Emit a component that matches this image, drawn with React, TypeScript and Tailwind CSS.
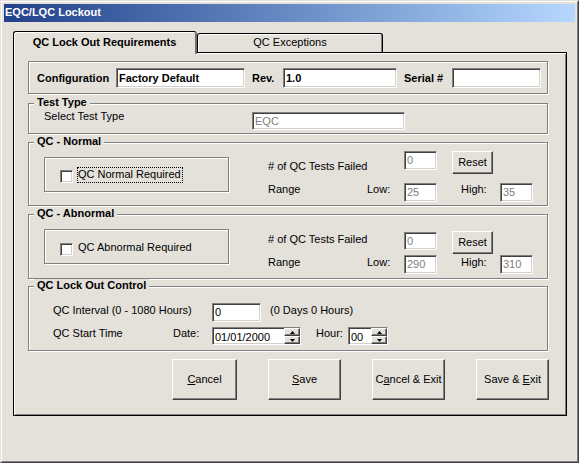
import React from "react";

const SUNKEN =
  "border border-t-[#808080] border-l-[#808080] border-r-white border-b-white shadow-[inset_1px_1px_0_#404040,inset_-1px_-1px_0_#d4d0c8]";
const RAISED =
  "border border-t-white border-l-white border-r-[#404040] border-b-[#404040] shadow-[inset_-1px_-1px_0_#808080] bg-[#E4E1DB]";
const ETCHED =
  "border border-[#808080] shadow-[inset_1px_1px_0_#ffffff,1px_1px_0_#ffffff]";

function Field({
  className,
  children,
  gray = false,
  bold = false,
}: {
  className: string;
  children?: React.ReactNode;
  gray?: boolean;
  bold?: boolean;
}) {
  return (
    <div
      className={`${SUNKEN} flex items-center overflow-hidden bg-white pl-[2px] ${
        gray ? "text-[#808080]" : "text-black"
      } ${bold ? "font-bold" : ""} ${className}`}
    >
      {children}
    </div>
  );
}

function Btn({ className, children }: { className: string; children: React.ReactNode }) {
  return (
    <div className={`${RAISED} flex items-center justify-center ${className}`}>
      <span>{children}</span>
    </div>
  );
}

function Group({
  title,
  className,
  children,
}: {
  title: string;
  className: string;
  children: React.ReactNode;
}) {
  return (
    <div className={`${ETCHED} w-[520px] ${className}`}>
      <div className="-mt-[8px] ml-[5px] w-fit bg-[#E4E1DB] px-[3px] font-bold leading-[13px]">
        {title}
      </div>
      {children}
    </div>
  );
}

function Spinner() {
  return (
    <div className="flex w-[16px] flex-col">
      <div className={`${RAISED} flex h-[8px] items-center justify-center`}>
        <svg width="5" height="3" viewBox="0 0 5 3">
          <path d="M2.5 0L5 3H0Z" fill="#000" />
        </svg>
      </div>
      <div className={`${RAISED} flex h-[8px] items-center justify-center`}>
        <svg width="5" height="3" viewBox="0 0 5 3">
          <path d="M0 0H5L2.5 3Z" fill="#000" />
        </svg>
      </div>
    </div>
  );
}

function CheckRow({ label, focus }: { label: string; focus: boolean }) {
  return (
    <div className="flex items-start">
      <div className={`${SUNKEN} mt-[3px] h-[13px] w-[13px] bg-white`} />
      <div
        className={`ml-[4px] h-[16px] border pr-[1px] ${
          focus ? "border-dotted border-black" : "border-transparent"
        }`}
      >
        {label}
      </div>
    </div>
  );
}

export default function App() {
  return (
    <div className="h-[463px] w-[579px] border border-t-[#E4E1DB] border-l-[#E4E1DB] border-r-[#404040] border-b-[#404040] bg-[#E4E1DB] font-['Liberation_Sans',Arial,sans-serif] text-[11px] leading-[13px] text-black">
      <div className="h-full border border-t-white border-l-white border-r-[#808080] border-b-[#808080] p-[2px]">
        {/* Title bar */}
        <div className="h-[18px] bg-gradient-to-r from-[#23418A] to-[#B6D8FF] pl-[1px] pt-[2px] font-bold text-white">
          EQC/LQC Lockout
        </div>

        {/* Tabs */}
        <div className="ml-[9px] mt-[9px] flex items-start">
          <div className="relative z-10 -mb-[2px] h-[23px] w-[184px] rounded-t-[3px] border-l border-t border-r-2 border-l-black border-t-black border-r-[#707070] bg-[#E4E1DB] pt-[4px] text-center font-bold shadow-[inset_1px_1px_0_#ffffff]">
            QC Lock Out Requirements
          </div>
          <div className="mt-[2px] h-[19px] w-[186px] rounded-t-[3px] border-l border-r border-t border-black pt-[2px] text-center shadow-[inset_1px_1px_0_#ffffff,inset_-1px_0_0_#808080]">
            QC Exceptions
          </div>
        </div>

        {/* Panel */}
        <div className="ml-[9px] h-[364px] w-[554px] border border-black pl-[14px] pt-[8px] shadow-[inset_1px_1px_0_#ffffff,inset_-1px_-1px_0_#808080]">
          {/* Configuration */}
          <div className={`${ETCHED} h-[33px] w-[520px] pl-[8px] pt-[6px] font-bold`}>
            <div className="flex h-[20px] items-center">
              <span className="w-[79px]">Configuration</span>
              <Field className="h-[20px] w-[129px]" bold>
                Factory Default
              </Field>
              <span className="ml-[7px] w-[31px]">Rev.</span>
              <Field className="h-[20px] w-[114px]" bold>
                1.0
              </Field>
              <span className="ml-[7px] w-[48px]">Serial #</span>
              <Field className="h-[20px] w-[89px]" bold>
                {""}
              </Field>
            </div>
          </div>

          {/* Test Type */}
          <Group title="Test Type" className="mt-[9px] h-[31px]">
            <div className="flex items-start pl-[15px]">
              <span className="mt-[1px] w-[208px]">Select Test Type</span>
              <Field className="mt-[3px] h-[18px] w-[153px]" gray>
                EQC
              </Field>
            </div>
          </Group>

          {/* QC - Normal */}
          <Group title="QC - Normal" className="mt-[8px] h-[64px]">
            <div className="flex items-start">
              <div className={`${ETCHED} ml-[15px] mt-[9px] h-[35px] w-[185px]`}>
                <div className="ml-[15px] mt-[9px]">
                  <CheckRow label="QC Normal Required" focus={true} />
                </div>
              </div>
              <div className="ml-[39px] mt-[3px] flex flex-col">
                <div className="flex items-start">
                  <span className="mt-[9px] w-[136px]"># of QC Tests Failed</span>
                  <Field className="h-[19px] w-[33px]" gray>
                    0
                  </Field>
                  <Btn className="ml-[15px] h-[23px] w-[41px]">Reset</Btn>
                </div>
                <div className="mt-[9px] flex items-start">
                  <span className="w-[99px]">Range</span>
                  <span className="w-[37px]">Low:</span>
                  <Field className="h-[19px] w-[33px]" gray>
                    25
                  </Field>
                  <span className="ml-[24px] w-[39px]">High:</span>
                  <Field className="h-[19px] w-[33px]" gray>
                    35
                  </Field>
                </div>
              </div>
            </div>
          </Group>

          {/* QC - Abnormal */}
          <Group title="QC - Abnormal" className="mt-[8px] h-[65px]">
            <div className="flex items-start">
              <div className={`${ETCHED} ml-[15px] mt-[9px] h-[35px] w-[185px]`}>
                <div className="ml-[15px] mt-[10px]">
                  <CheckRow label="QC Abnormal Required" focus={false} />
                </div>
              </div>
              <div className="ml-[39px] mt-[11px] flex flex-col">
                <div className="flex items-start">
                  <span className="mt-[2px] w-[136px]"># of QC Tests Failed</span>
                  <Field className="mt-[1px] h-[18px] w-[33px]" gray>
                    0
                  </Field>
                  <Btn className="ml-[15px] h-[23px] w-[41px]">Reset</Btn>
                </div>
                <div className="mt-[1px] flex items-start">
                  <span className="mt-[1px] w-[99px]">Range</span>
                  <span className="mt-[1px] w-[37px]">Low:</span>
                  <Field className="h-[19px] w-[33px]" gray>
                    290
                  </Field>
                  <span className="ml-[24px] mt-[1px] w-[39px]">High:</span>
                  <Field className="h-[19px] w-[33px]" gray>
                    310
                  </Field>
                </div>
              </div>
            </div>
          </Group>

          {/* QC Lock Out Control */}
          <Group title="QC Lock Out Control" className="mt-[7px] h-[65px]">
            <div className="ml-[24px] mt-[11px] flex items-start">
              <span className="mt-[1px] w-[159px]">QC Interval (0 - 1080 Hours)</span>
              <Field className="h-[19px] w-[49px]">0</Field>
              <span className="ml-[9px] mt-[1px]">(0 Days 0 Hours)</span>
            </div>
            <div className="ml-[24px] mt-[5px] flex items-start">
              <span className="w-[120px]">QC Start Time</span>
              <span className="w-[39px]">Date:</span>
              <div className={`${SUNKEN} flex h-[18px] w-[89px] bg-white`}>
                <span className="flex-1 pl-[2px] pt-[3px]">01/01/2000</span>
                <Spinner />
              </div>
              <span className="ml-[15px] w-[32px]">Hour:</span>
              <div className={`${SUNKEN} flex h-[18px] w-[40px] bg-white`}>
                <span className="flex-1 pl-[2px] pt-[3px]">00</span>
                <Spinner />
              </div>
            </div>
          </Group>

          {/* Buttons */}
          <div className="ml-[144px] mt-[8px] flex gap-[31px]">
            <Btn className="h-[41px] w-[65px]">
              <span className="underline underline-offset-1">C</span>ancel
            </Btn>
            <Btn className="h-[41px] w-[73px]">
              <span className="underline underline-offset-1">S</span>ave
            </Btn>
            <Btn className="h-[41px] w-[73px]">
              C<span className="underline underline-offset-1">a</span>ncel &amp; Exit
            </Btn>
            <Btn className="h-[41px] w-[73px]">
              Save &amp; <span className="underline underline-offset-1">E</span>xit
            </Btn>
          </div>
        </div>
      </div>
    </div>
  );
}
